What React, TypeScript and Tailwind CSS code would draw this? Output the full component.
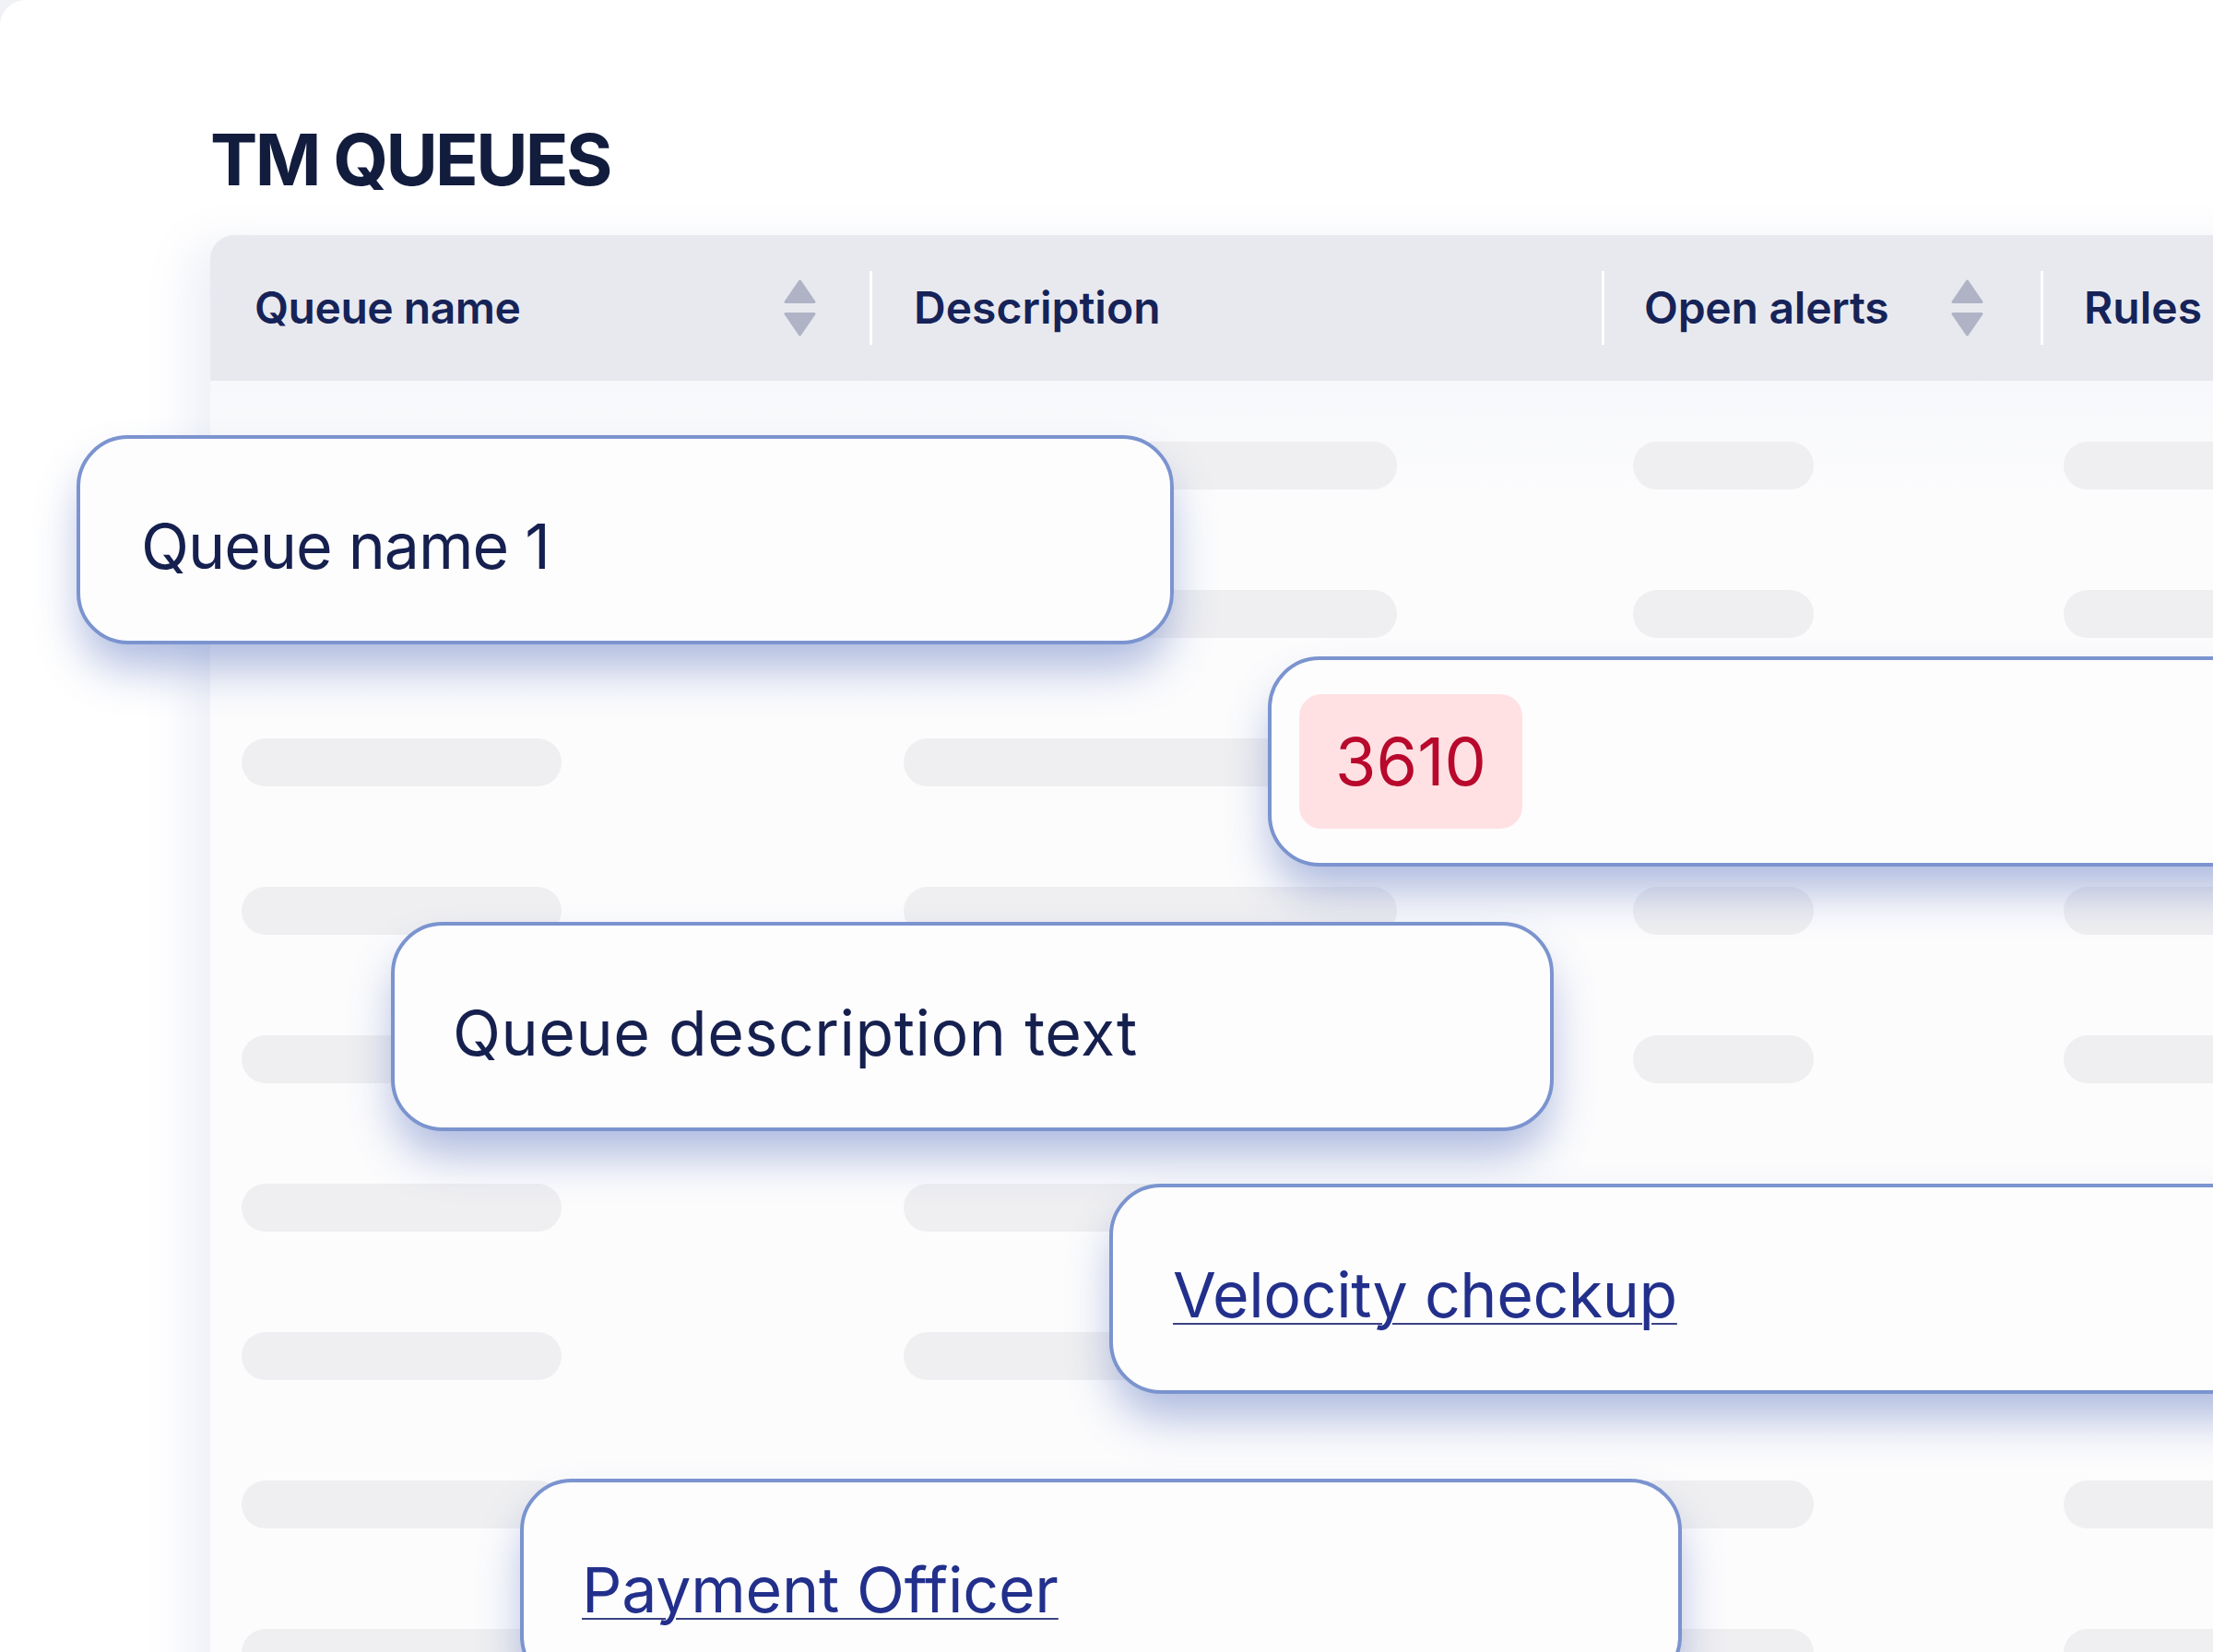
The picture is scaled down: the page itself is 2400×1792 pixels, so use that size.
import React from "react";

function SortIcon() {
  return (
    <svg width="35" height="62" viewBox="0 0 35 62" className="shrink-0">
      <path d="M17.5 2 L33 24.5 L2 24.5 Z" fill="#b0b3c6" stroke="#b0b3c6" strokeWidth="3" strokeLinejoin="round" />
      <path d="M2 37.5 L33 37.5 L17.5 60 Z" fill="#b0b3c6" stroke="#b0b3c6" strokeWidth="3" strokeLinejoin="round" />
    </svg>
  );
}

function Divider() {
  return <span className="block w-[3px] h-[80px] bg-white shrink-0" />;
}

function Bar({ w, ml }: { w: string; ml: string }) {
  return <div className={`h-[52px] rounded-full bg-[#efeff1] ${w} ${ml}`} />;
}

const rows = [0, 1, 2, 3, 4, 5, 6, 7, 8];

export default function App() {
  return (
    <div className="w-[2400px] h-[1792px] overflow-hidden bg-[#f1f2f5] font-['Inter',sans-serif]">
      <div className="relative h-full rounded-tl-[28px] bg-white pl-[228px] pt-[135px] overflow-hidden">
        <h1 className="text-[77px] leading-[77px] font-bold tracking-[-0.035em] text-[#121c3d]">TM QUEUES</h1>

        <div className="mt-[43px] w-[2300px] rounded-tl-[26px] overflow-hidden bg-[#fcfcfd] shadow-[-22px_10px_50px_rgba(110,120,190,0.12)] h-[1700px]">
          <div className="h-[158px] bg-[#e8e9ef] grid grid-cols-[715px_794px_476px_1fr] items-center text-[48px] font-semibold text-[#162358]">
            <div className="flex items-center pl-[48px] pr-[58px]">
              <span className="tracking-[-0.01em]">Queue name</span>
              <span className="ml-auto">
                <SortIcon />
              </span>
            </div>
            <div className="flex items-center">
              <Divider />
              <span className="pl-[45px]">Description</span>
            </div>
            <div className="flex items-center pr-[62px]">
              <Divider />
              <span className="pl-[43px] tracking-[-0.005em]">Open alerts</span>
              <span className="ml-auto">
                <SortIcon />
              </span>
            </div>
            <div className="flex items-center">
              <Divider />
              <span className="pl-[44px]">Rules</span>
            </div>
          </div>

          <div className="pt-[66px] flex flex-col gap-[109px] bg-gradient-to-b from-[#f7f8fb] to-[#fcfcfd] to-[8%] h-full">
            {rows.map((r) => (
              <div key={r} className="grid grid-cols-[715px_794px_476px_1fr]">
                <Bar w="w-[347px]" ml="ml-[34px]" />
                <Bar w="w-[535px]" ml="ml-[37px]" />
                <Bar w="w-[196px]" ml="ml-[34px]" />
                <Bar w="w-[300px]" ml="ml-[25px]" />
              </div>
            ))}
          </div>
        </div>

        {/* Overlay cards */}
        <div className="absolute left-[83px] top-[472px] w-[1190px] h-[227px] rounded-[56px] border-4 border-[#7b94cf] bg-[#fdfdfe] shadow-[0_30px_50px_-6px_rgba(70,100,185,0.45)] flex items-center pl-[66px] pt-[12px]">
          <span className="text-[68px] leading-none tracking-[-0.015em] text-[#16204f]">Queue name 1</span>
        </div>

        <div className="absolute left-[1375px] top-[712px] w-[1200px] h-[228px] rounded-[56px] border-4 border-[#7b94cf] bg-[#fdfdfe] shadow-[0_30px_50px_-6px_rgba(70,100,185,0.45)] flex items-center pl-[30px]">
          <div className="h-[146px] w-[242px] rounded-[24px] bg-[#ffe1e4] flex items-center justify-center">
            <span className="text-[72px] leading-none text-[#b8092c]">3610</span>
          </div>
        </div>

        <div className="absolute left-[424px] top-[1000px] w-[1261px] h-[227px] rounded-[56px] border-4 border-[#7b94cf] bg-[#fdfdfe] shadow-[0_30px_50px_-6px_rgba(70,100,185,0.45)] flex items-center pl-[63px] pt-[12px]">
          <span className="text-[68px] leading-none tracking-[0.008em] text-[#16204f]">Queue description text</span>
        </div>

        <div className="absolute left-[1203px] top-[1284px] w-[1300px] h-[228px] rounded-[56px] border-4 border-[#7b94cf] bg-[#fdfdfe] shadow-[0_30px_50px_-6px_rgba(70,100,185,0.45)] flex items-center pl-[65px] pt-[12px]">
          <span className="text-[68px] leading-none tracking-[-0.006em] text-[#22308c] underline decoration-2 underline-offset-[6px] decoration-[#3b4383]">Velocity checkup</span>
        </div>

        <div className="absolute left-[564px] top-[1604px] w-[1260px] h-[227px] rounded-[56px] border-4 border-[#7b94cf] bg-[#fdfdfe] shadow-[0_30px_50px_-6px_rgba(70,100,185,0.45)] flex items-center pl-[63px] pt-[12px]">
          <span className="text-[68px] leading-none tracking-[-0.003em] text-[#22308c] underline decoration-2 underline-offset-[6px] decoration-[#3b4383]">Payment Officer</span>
        </div>
      </div>
    </div>
  );
}
